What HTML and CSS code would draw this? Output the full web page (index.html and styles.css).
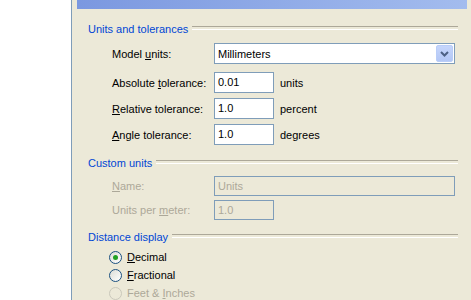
FILE: index.html
```html
<!DOCTYPE html>
<html lang="en">
<head>
    <meta charset="UTF-8">
    <title>Units</title>
    <link rel="stylesheet" href="styles.css">
</head>
<body>
    <div class="window">
        <div class="tree"></div>
        <div class="panel">
            <div class="caption"></div>

            <div class="group-title">Units and tolerances</div>
            <div class="row first">
                <span class="label">Model <u>u</u>nits:</span>
                <div class="combo">
                    <span class="combo-text">Millimeters</span>
                    <span class="combo-btn">
                        <svg width="9" height="6" viewBox="0 0 9 6"><path d="M1 1 L4.5 4.5 L8 1" fill="none" stroke="#4d6185" stroke-width="2"/></svg>
                    </span>
                </div>
            </div>
            <div class="row gap8">
                <span class="label">Absolute <u>t</u>olerance:</span>
                <div class="field">0.01</div>
                <span class="unit">units</span>
            </div>
            <div class="row gap5">
                <span class="label"><u>R</u>elative tolerance:</span>
                <div class="field">1.0</div>
                <span class="unit">percent</span>
            </div>
            <div class="row gap5">
                <span class="label"><u>A</u>ngle tolerance:</span>
                <div class="field">1.0</div>
                <span class="unit">degrees</span>
            </div>

            <div class="group-title second">Custom units</div>
            <div class="row small first-custom disabled">
                <span class="label"><u>N</u>ame:</span>
                <div class="field wide">Units</div>
            </div>
            <div class="row small gap4 disabled">
                <span class="label">Units per <u>m</u>eter:</span>
                <div class="field">1.0</div>
            </div>

            <div class="group-title third">Distance display</div>
            <div class="radios">
                <div class="radio checked"><span class="dot"></span><span><u>D</u>ecimal</span></div>
                <div class="radio"><span class="dot"></span><span><u>F</u>ractional</span></div>
                <div class="radio disabled"><span class="dot"></span><span>Feet &amp; <u>I</u>nches</span></div>
            </div>
        </div>
    </div>
</body>
</html>
```

FILE: styles.css
```css
* {
    margin: 0;
    padding: 0;
    box-sizing: border-box;
}
body {
    width: 471px;
    height: 300px;
    overflow: hidden;
    font-family: "Liberation Sans", Arial, sans-serif;
    font-size: 11px;
    color: #000;
}
.window {
    display: flex;
    height: 300px;
}
.tree {
    width: 72px;
    background: #fff;
    border-right: 1px solid #7f9db9;
}
.panel {
    flex: 1;
    background: #ece9d8;
    padding: 0 4px 0 5px;
}
.caption {
    height: 9px;
    background-image: linear-gradient(to right, #7b98e0, #a3bcee);
}
.group-title {
    display: flex;
    align-items: center;
    height: 13px;
    margin: 13px 9px 0 11px;
    color: #0046d5;
}
.group-title::after {
    content: "";
    flex: 1;
    height: 2px;
    margin: 0 0 0 4px;
    border-top: 1px solid #aca899;
    border-bottom: 1px solid #fff;
    position: relative;
    top: -1px;
}
.group-title.second {
    margin-top: 11px;
}
.group-title.third {
    margin-top: 10px;
}
.row {
    display: flex;
    align-items: center;
    height: 21px;
    padding-left: 35px;
}
.row.small {
    height: 20px;
}
.row.first {
    margin-top: 8px;
}
.row.first-custom {
    margin-top: 7px;
}
.gap8 {
    margin-top: 8px;
}
.gap5 {
    margin-top: 5px;
}
.gap4 {
    margin-top: 4px;
}
.label {
    width: 102px;
    white-space: nowrap;
}
.field {
    width: 60px;
    height: 100%;
    background: #fff;
    border: 1px solid #7f9db9;
    padding-left: 3px;
    line-height: 19px;
}
.field.wide {
    width: 241px;
}
.unit {
    margin-left: 6px;
}
.disabled .label,
.disabled .field {
    color: #aca899;
}
.disabled .field {
    background: #ece9d8;
    line-height: 18px;
}
.combo {
    display: flex;
    align-items: center;
    width: 241px;
    height: 100%;
    background: #fff;
    border: 1px solid #7f9db9;
    padding: 0 1px 0 3px;
}
.combo-text {
    flex: 1;
}
.combo-btn {
    display: flex;
    align-items: center;
    justify-content: center;
    width: 17px;
    height: 17px;
    border-radius: 2px;
    background-image: linear-gradient(to bottom, #c6d6fc, #b3c7f5);
    border: 1px solid #b9cdf8;
}
.radios {
    margin-top: 5px;
    padding-left: 32px;
}
.radio {
    display: flex;
    align-items: center;
    height: 18px;
}
.radio .dot {
    width: 13px;
    height: 13px;
    border-radius: 50%;
    border: 1px solid #1c5180;
    background-image: linear-gradient(135deg, #dcdcd6, #fff);
    margin-right: 5px;
    display: flex;
    align-items: center;
    justify-content: center;
}
.radio.checked .dot::after {
    content: "";
    width: 5px;
    height: 5px;
    border-radius: 50%;
    background: #21a121;
}
.radio.disabled {
    color: #aca899;
}
.radio.disabled .dot {
    border-color: #cac8bb;
    background: #ece9d8;
}
```
